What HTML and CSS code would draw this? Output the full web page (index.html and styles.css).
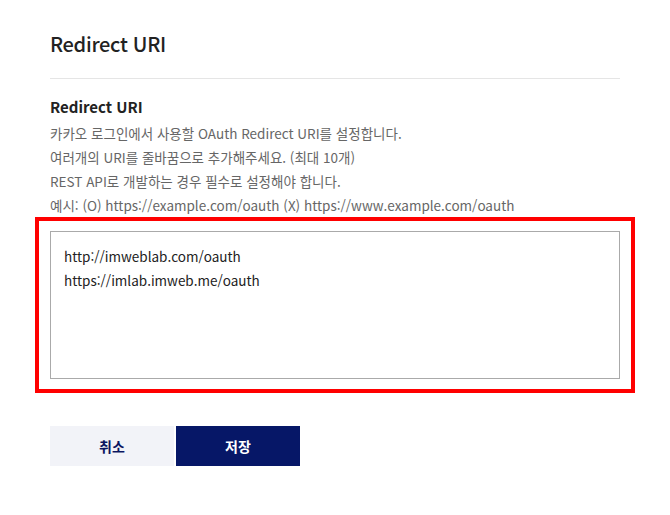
FILE: index.html
```html
<!DOCTYPE html>
<html lang="ko">
<head>
    <meta charset="UTF-8">
    <meta name="viewport" content="width=device-width, initial-scale=1.0">
    <title>Redirect URI</title>
    <link rel="stylesheet" href="styles.css">
</head>
<body>
    <div class="panel">
        <h1 class="panel-title">Redirect URI</h1>

        <div class="field">
            <h2 class="field-label">Redirect URI</h2>
            <p class="field-desc">카카오 로그인에서 사용할 OAuth Redirect URI를 설정합니다.</p>
            <p class="field-desc">여러개의 URI를 줄바꿈으로 추가해주세요. (최대 10개)</p>
            <p class="field-desc">REST API로 개발하는 경우 필수로 설정해야 합니다.</p>
            <p class="field-desc">예시: (O) https://example.com/oauth (X) https://www.example.com/oauth</p>

            <div class="highlight">
                <textarea class="uri-input">http://imweblab.com/oauth
https://imlab.imweb.me/oauth</textarea>
            </div>
        </div>

        <div class="actions">
            <button class="btn btn-cancel">취소</button>
            <button class="btn btn-save">저장</button>
        </div>
    </div>
</body>
</html>
```

FILE: styles.css
```css
body {
    font-family: "Noto Sans CJK KR", "Noto Sans", sans-serif;
    margin: 0;
    background-color: #fff;
    color: #222;
}

.panel {
    width: 570px;
    padding: 28px 50px;
}

.panel-title {
    margin: 0;
    font-size: 20px;
    font-weight: 500;
    letter-spacing: -0.3px;
    line-height: 32px;
    padding-bottom: 18px;
    border-bottom: 1px solid #e5e5e5;
}

.field {
    padding-top: 16px;
}

.field-label {
    margin: 0 0 2px;
    font-size: 15px;
    font-weight: 700;
    line-height: 24px;
}

.field-desc {
    margin: 0;
    font-size: 13.5px;
    line-height: 24px;
    color: #666;
}

.highlight {
    margin: 0 -15px;
    border: 4px solid #ff0000;
    padding: 10px 11px;
}

.uri-input {
    display: block;
    box-sizing: border-box;
    width: 570px;
    height: 148px;
    padding: 12px 13px;
    border: 1px solid #aaa;
    border-radius: 0;
    font-family: inherit;
    font-size: 13.5px;
    line-height: 24px;
    color: #222;
    resize: none;
    outline: none;
}

.actions {
    display: flex;
    gap: 2px;
    margin-top: 33px;
}

.btn {
    width: 124px;
    height: 40px;
    border: 0;
    font-family: inherit;
    font-size: 14px;
    font-weight: 700;
    cursor: pointer;
}

.btn-cancel {
    background-color: #f2f3f8;
    color: #0a1560;
}

.btn-save {
    background-color: #061767;
    color: #fff;
}
```
